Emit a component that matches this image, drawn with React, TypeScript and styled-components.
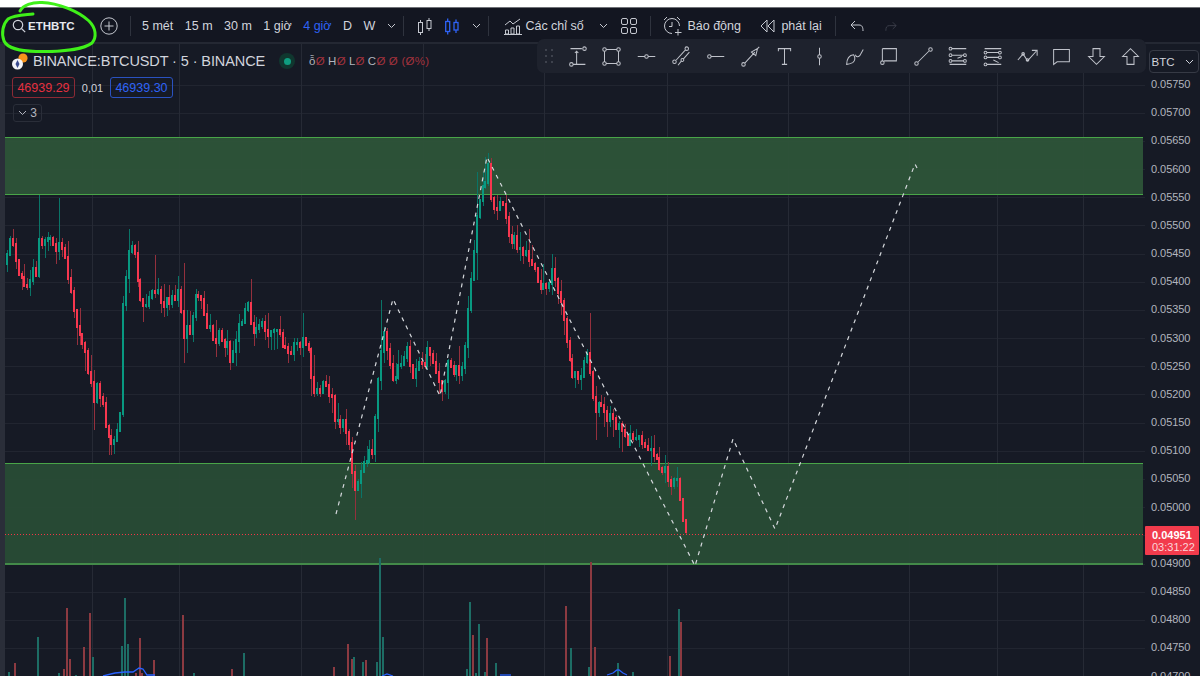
import React from "react";
import styled, { createGlobalStyle } from "styled-components";

const Global = createGlobalStyle`
  html, body { margin: 0; padding: 0; background: #fff; overflow: hidden; }
  body { font-family: "Liberation Sans", Arial, sans-serif; }
  * { box-sizing: border-box; }
`;

const BG = "#161a25";
const Page = styled.div`width: 1200px; height: 676px; display: flex; flex-direction: column; overflow: hidden; position: relative; background: #fff;`;
const TopStrip = styled.div`height: 8px; background: #fff; border-bottom: 1px solid #6f7177; flex: none;`;
const Toolbar = styled.header`height: 36px; flex: none; display: flex; align-items: center; background: #131621; color: #d1d4dc; font-size: 12.5px; padding: 2px 0 0 12px; border-bottom: 2px solid #242833;`;
const Search = styled.div`display: flex; align-items: center; gap: 2px; width: 88px; font-size: 11.5px; font-weight: 700; color: #e6e8ee;`;
const Divider = styled.span<{ $m?: string }>`width: 1px; height: 20px; background: #2f333e; flex: none; margin: ${p => p.$m || "0"};`;
const IconSlot = styled.span<{ $w: number; $c?: string; $ml?: number }>`width: ${p => p.$w}px; margin-left: ${p => p.$ml || 0}px; display: flex; justify-content: center; align-items: center; flex: none; color: ${p => p.$c || "#c5c8d0"};`;
const Tf = styled.span<{ $on?: boolean }>`color: ${p => p.$on ? "#2e63f6" : "#d1d4dc"}; white-space: nowrap; flex: none;`;
const TfGroup = styled.div`display: flex; gap: 11.5px; align-items: center; margin-left: 11px; flex: none;`;
const Label = styled.span<{ $ml?: number; $w?: number }>`margin-left: ${p => p.$ml || 0}px; white-space: nowrap; flex: none; ${p => p.$w ? `width:${p.$w}px;` : ""}`;
const Spacer = styled.span<{ $w: number }>`width: ${p => p.$w}px; flex: none;`;

const ChartRow = styled.div`flex: 1; display: flex; min-height: 0; position: relative;`;
const Rail = styled.div`width: 5px; flex: none; background: #2a2e39;`;
const Pane = styled.main`width: 1140px; flex: none; position: relative; background: ${BG};`;
const ChartSvg = styled.svg`display: block; width: 1140px; height: 632px;`;
const Axis = styled.aside`flex: 1; background: ${BG}; padding-top: 6px; display: flex; flex-direction: column; align-items: center; overflow: hidden;`;
const Select = styled.div`width: 50px; height: 23px; flex: none; border: 1px solid #363a45; border-radius: 4px; color: #d1d4dc; font-size: 11.5px; display: flex; align-items: center; justify-content: space-between; padding: 0 4px 0 2px; margin-left: 2px;`;
const Ticks = styled.div`margin-top: -3px; width: 100%;`;
const Tick = styled.div`height: 28.18px; line-height: 28.18px; font-size: 11px; color: #b2b5be; padding-left: 6px; letter-spacing: -.05px;`;
const PriceTag = styled.div`position: absolute; right: 1px; top: 482px; width: 54px; height: 29px; background: #f23b4c; border-radius: 1px; padding: 3px 0 0 7px; font-size: 11px; line-height: 12px; color: #fff; font-weight: 700;`;
const TagTime = styled.div`font-weight: 400; color: #fbd5d8;`;

const Legend = styled.div`position: absolute; left: 7px; top: 7px; display: flex; flex-direction: column; align-items: flex-start; color: #d1d4dc;`;
const TitleRow = styled.div`display: flex; align-items: center; height: 20px;`;
const Title = styled.span`font-size: 14.5px; margin-left: 5px; white-space: nowrap; color: #d1d4dc; letter-spacing: -.1px;`;
const Live = styled.span`width: 16px; height: 16px; border-radius: 50%; background: #10372f; margin-left: 14px; display: flex; align-items: center; justify-content: center; &::after { content: ""; width: 7px; height: 7px; border-radius: 50%; background: #0f9d80; }`;
const Ohlc = styled.span`margin-left: 14px; font-size: 11.5px; color: #b2b5be; letter-spacing: .3px; white-space: nowrap; b { font-weight: 400; color: #a2323d; margin-right: 3px; }`;
const Prices = styled.div`display: flex; align-items: center; margin-top: 6px;`;
const PriceBox = styled.span<{ $c: string; $b: string }>`width: 63px; height: 21px; border: 1px solid ${p => p.$b}; border-radius: 3px; color: ${p => p.$c}; font-size: 12.5px; display: flex; align-items: center; justify-content: center;`;
const Spread = styled.span`font-size: 11px; width: 35px; text-align: center; color: #d1d4dc;`;
const Collapse = styled.span`margin-top: 6px; margin-left: 1px; width: 29px; height: 18px; border: 1px solid #2a2e39; border-radius: 3px; font-size: 12px; display: flex; align-items: center; justify-content: center; gap: 3px; color: #b2b5be;`;

const DrawBar = styled.div`position: absolute; left: 532px; top: -5px; width: 609px; height: 34px; background: #1e222d; border-radius: 7px; display: flex; align-items: center; padding-left: 1px;`;
const Grip = styled.span`width: 22px; flex: none; display: flex; justify-content: center;`;
const ToolBtn = styled.span`width: 34.6px; flex: none; display: flex; justify-content: center; color: #bfc2ca;`;
const Scribble = styled.svg`position: absolute; left: 0; top: 0; pointer-events: none;`;

/* ---------- data ---------- */
const way: [number, number][] = [[5,262],[8,245],[11,235],[15,262],[20,278],[25,285],[30,276],[35,268],[38,240],[45,232],[52,240],[55,255],[60,235],[65,262],[70,290],[75,322],[80,345],[85,352],[92,400],[97,385],[105,425],[112,447],[116,430],[120,405],[122,300],[127,258],[132,232],[138,290],[145,305],[155,285],[162,305],[170,300],[178,295],[182,330],[190,330],[195,290],[200,290],[205,320],[212,335],[222,335],[230,358],[238,325],[245,300],[252,325],[260,325],[268,335],[275,320],[283,348],[295,345],[302,335],[308,345],[312,385],[320,385],[330,395],[335,425],[343,415],[349,445],[352,490],[358,480],[365,455],[372,445],[376,395],[382,332],[387,350],[392,378],[400,365],[405,345],[412,372],[420,365],[428,350],[436,378],[440,388],[447,362],[455,368],[463,365],[468,290],[472,255],[476,215],[480,185],[484,190],[487,165],[490,192],[495,215],[500,200],[505,215],[510,240],[515,240],[520,250],[525,248],[532,268],[540,285],[545,290],[550,270],[555,280],[560,300],[565,340],[570,368],[578,382],[582,365],[588,350],[590,395],[595,412],[600,402],[605,418],[610,405],[615,422],[620,432],[625,442],[630,435],[635,442],[640,440],[645,447],[650,448],[655,458],[660,470],[665,472],[670,488],[675,478],[680,505],[684,525],[688,534]];
const spikes: Record<number, number> = { 37: 195, 57: 198, 153: 255, 182: 263, 249: 279, 301: 313, 380: 300, 485: 157, 477: 172, 590: 313, 677: 467 };
const lows: Record<number, number> = { 182: 363, 92: 430, 109: 455, 354: 520, 472: 280, 475: 280, 596: 440, 615: 415 };

function rng(seed: number) { return () => { seed = (seed * 1664525 + 1013904223) >>> 0; return seed / 4294967296; }; }
function interp(x: number) {
  for (let i = 1; i < way.length; i++) if (x <= way[i][0]) {
    const [a, b] = way[i - 1]; const [c, d] = way[i];
    return b + (d - b) * (x - a) / (c - a);
  }
  return way[way.length - 1][1];
}
function buildCandles() {
  const r = rng(77); let g = "", gw = "", d = "", dw = ""; let prev = interp(5);
  const near = (m: Record<number, number>, x: number) => { for (const k of Object.keys(m)) if (Math.abs(+k - x) < 1.5) return m[+k]; return null; };
  for (let x = 6; x <= 686; x += 2.9) {
    const xr = Math.round(x);
    const c = Math.round(interp(x) + (r() - .5) * 13);
    const o = Math.round(prev);
    const top = Math.min(o, c); const bot = Math.max(o, c) + 2;
    const up = c <= o;
    let wt = top - Math.round(r() * r() * 22); let wb = bot + Math.round(r() * r() * 22);
    const st = near(spikes, x); const lo = near(lows, x);
    if (st !== null) wt = st; if (lo !== null) wb = lo;
    const body = `M${xr} ${top}h2.4v${bot - top + 1}h-2.4z`;
    const wick = `M${xr + .6} ${wt}h1.2v${wb - wt}h-1.2z`;
    if (up) { g += body; gw += wick; } else { d += body; dw += wick; }
    prev = c;
  }
  return { g, gw, d, dw };
}
const candles = buildCandles();

const vols: [number, number, 0 | 1][] = [[8,672,1],[14,663,0],[37,637,1],[58,673,1],[63,669,0],[66,608,0],[69,659,0],[75,675,1],[83,647,0],[89,613,0],[92,657,1],[121,646,1],[124,598,1],[127,644,1],[135,673,0],[139,638,0],[141,673,0],[153,660,0],[182,615,0],[193,673,1],[231,669,0],[243,653,1],[333,667,0],[347,644,0],[351,659,0],[353,657,1],[362,662,1],[365,660,0],[376,662,1],[379,558,1],[382,637,1],[466,669,1],[469,602,1],[472,635,0],[475,673,1],[478,624,1],[484,672,1],[486,638,0],[495,663,1],[565,606,0],[570,648,1],[588,667,1],[590,562,0],[594,647,0],[617,663,1],[632,672,1],[669,656,0],[678,609,1],[680,622,0]];

const hGrid = Array.from({ length: 22 }, (_, i) => 84.5 + i * 28.18);
const vGrid = [92, 179, 301, 423, 544, 667, 788, 909, 997, 1083];
const labels = Array.from({ length: 22 }, (_, i) => (0.0575 - i * 0.0005).toFixed(5));

const Line = (p: { d: string; w?: number }) => <path d={p.d} fill="none" stroke="currentColor" strokeWidth={p.w || 1} />;
const dot = (x: number, y: number) => `M${x - 1.6} ${y}a1.6 1.6 0 1 0 3.2 0a1.6 1.6 0 1 0 -3.2 0`;
const tools: string[] = [
  "M4 3h13M20 3m-2 0a2 2 0 1 0 4 0a2 2 0 1 0 -4 0M11 6v15M9 8l2-2 2 2M7 21h14M5 21m-2 0a2 2 0 1 0 4 0a2 2 0 1 0 -4 0",
  "M4 6v12M20 6v12M6 4h12M6 20h12M4 4m-2 0a2 2 0 1 0 4 0a2 2 0 1 0 -4 0M20 4m-2 0a2 2 0 1 0 4 0a2 2 0 1 0 -4 0M4 20m-2 0a2 2 0 1 0 4 0a2 2 0 1 0 -4 0M20 20m-2 0a2 2 0 1 0 4 0a2 2 0 1 0 -4 0",
  "M2 12h8M14 12h8M12 12m-2 0a2 2 0 1 0 4 0a2 2 0 1 0 -4 0",
  "M6 16L16 5M18 3m-2 0a2 2 0 1 0 4 0a2 2 0 1 0 -4 0M4 18m-2 0a2 2 0 1 0 4 0a2 2 0 1 0 -4 0M8 22L12 17M14 15L21 7M13 16m-1.6 0a1.6 1.6 0 1 0 3.2 0a1.6 1.6 0 1 0 -3.2 0",
  "M7 12h15M5 12m-2 0a2 2 0 1 0 4 0a2 2 0 1 0 -4 0",
  "M6 19L17 7M4 21m-2 0a2 2 0 1 0 4 0a2 2 0 1 0 -4 0M20 3l-2 8-5-4zM20 3l2-2",
  "M5 6V3h14v3M12 3v18M9 21h6",
  "M12 2v8M12 14v8M12 12m-2 0a2 2 0 1 0 4 0a2 2 0 1 0 -4 0",
  "M3 21c0-6 3-11 8-11c2 3 2 7-1 9c-2 1-4 2-7 2zM13 10c1 3 3 3 5 1l4-7",
  "M5 3h16v14H7M5 3v14M5 19m-2 0a2 2 0 1 0 4 0a2 2 0 1 0 -4 0",
  "M6 18L18 6M20 4m-2 0a2 2 0 1 0 4 0a2 2 0 1 0 -4 0M4 20m-2 0a2 2 0 1 0 4 0a2 2 0 1 0 -4 0",
  `M6 3h16M6 10.5h13M6 17h13M3 21h19M12 14l5-2${dot(4, 3)}${dot(4, 10.500)}${dot(20.500, 10.500)}${dot(4, 17)}${dot(20.500, 17)}`,
  `M3 3h19M6 7.500h13M6 13h13M6 21h16M13 16l6 3${dot(4, 7.500)}${dot(20.500, 7.500)}${dot(4, 13)}${dot(20.500, 13)}${dot(4, 21)}`,
  "M1 16L7 9l5 8 10-11M17 5h6v6M7 9m-1.5 0a1.5 1.5 0 1 0 3 0a1.5 1.5 0 1 0 -3 0M12 16m-1.5 0a1.5 1.5 0 1 0 3 0a1.5 1.5 0 1 0 -3 0",
  "M3 4h18v14H7l-4 3z",
  "M8 3h8v9h5l-9 9-9-9h5z",
  "M8 21h8v-9h5l-9-9-9 9h5z",
];

function Chevron() {
  return <svg width="9" height="6" viewBox="0 0 9 6" fill="none" stroke="currentColor"><path d="M1 1l3.500 3.500L8 1" /></svg>;
}

export default function App() {
  return (
    <Page>
      <Global />
      <TopStrip />
      <Toolbar>
        <Search>
          <svg width="14" height="14" viewBox="0 0 14 14" fill="none" stroke="#d1d4dc" strokeWidth="1.2"><circle cx="6" cy="6" r="4.7" /><path d="M9.500 9.500L13.200 13.200" /></svg>
          ETHBTC
        </Search>
        <IconSlot $w={18}>
          <svg width="18" height="18" viewBox="0 0 18 18" fill="none" stroke="currentColor"><circle cx="9" cy="9" r="8.2" /><path d="M9 4.500v9M4.500 9h9" /></svg>
        </IconSlot>
        <Divider $m="0 0 0 12px" />
        <TfGroup>
          <Tf>5 mét</Tf><Tf>15 m</Tf><Tf>30 m</Tf><Tf>1 giờ</Tf><Tf $on>4 giờ</Tf><Tf>D</Tf><Tf>W</Tf>
        </TfGroup>
        <IconSlot $w={12} $ml={10}><Chevron /></IconSlot>
        <Divider $m="0 0 0 6px" />
        <IconSlot $w={14} $ml={14}>
          <svg width="14" height="18" viewBox="0 0 14 18" fill="none" stroke="currentColor"><rect x=".5" y="5.500" width="4" height="10" /><path d="M2.500 3v2.500M2.500 15.500V18M11 1v2.500M11 11.500V14" /><rect x="9" y="3.500" width="4" height="8" /></svg>
        </IconSlot>
        <IconSlot $w={14} $c="#2e63f6" $ml={13}>
          <svg width="14" height="18" viewBox="0 0 14 18" fill="none" stroke="currentColor" strokeWidth="1.3"><rect x=".7" y="4.500" width="4" height="10" /><path d="M2.700 1.500v3M2.700 14.500v3M11 2.500v3M11 13v3" /><rect x="9" y="5.500" width="4" height="7.500" /></svg>
        </IconSlot>
        <IconSlot $w={12} $ml={11}><Chevron /></IconSlot>
        <Divider $m="0 0 0 6px" />
        <IconSlot $w={18} $ml={15}>
          <svg width="18" height="18" viewBox="0 0 18 18" fill="none" stroke="currentColor"><path d="M1 8l5-4 3 3 7-5" /><path d="M1.500 17v-4h3v4zM7 17v-6h3v6zM12.500 17v-8h3v8zM0 17.500h18" /></svg>
        </IconSlot>
        <Label $ml={3} $w={61}>Các chỉ số</Label>
        <IconSlot $w={12} $ml={11}><Chevron /></IconSlot>
        <IconSlot $w={16} $ml={12}>
          <svg width="16" height="16" viewBox="0 0 16 16" fill="none" stroke="currentColor"><rect x=".5" y=".5" width="6" height="6" rx="1.500" /><rect x="9.500" y=".5" width="6" height="6" rx="1.500" /><rect x=".5" y="9.500" width="6" height="6" rx="1.500" /><rect x="9.500" y="9.500" width="6" height="6" rx="1.500" /></svg>
        </IconSlot>
        <Divider $m="0 0 0 13px" />
        <IconSlot $w={20} $ml={12}>
          <svg width="20" height="20" viewBox="0 0 20 20" fill="none" stroke="currentColor"><path d="M9 17.500A7.500 7.500 0 1 1 16.500 10" /><path d="M9 6v4.500H6M1 4l3-3M17 4l-3-3M15 13v6.500M12 16.500h6.500" /></svg>
        </IconSlot>
        <Label $ml={4} $w={55}>Báo động</Label>
        <IconSlot $w={16} $ml={18}>
          <svg width="16" height="14" viewBox="0 0 16 14" fill="none" stroke="currentColor"><path d="M7 1L1 7l6 6zM14 1L8 7l6 6z" /></svg>
        </IconSlot>
        <Label $ml={5} $w={42}>phát lại</Label>
        <Divider $m="0 0 0 12px" />
        <IconSlot $w={14} $ml={14}>
          <svg width="14" height="12" viewBox="0 0 14 12" fill="none" stroke="currentColor"><path d="M5 1L1 5l4 4M1 5h8c3 0 4 2 4 6" /></svg>
        </IconSlot>
        <Spacer $w={21} />
        <IconSlot $w={12} $c="#3f434e">
          <svg width="12" height="11" viewBox="0 0 14 12" fill="none" stroke="currentColor"><path d="M9 1l4 4-4 4M13 5H5C2 5 1 7 1 11" /></svg>
        </IconSlot>
      </Toolbar>
      <ChartRow>
        <Rail />
        <Pane>
          <ChartSvg viewBox="5 44 1140 632" shapeRendering="crispEdges">
            <g stroke="#212530" strokeWidth="1">
              {hGrid.map(y => <line key={y} x1="5" x2="1145" y1={Math.round(y) + .5} y2={Math.round(y) + .5} />)}
              {vGrid.map(x => <line key={x} x1={x + .5} x2={x + .5} y1="44" y2="676" stroke="#262a35" />)}
            </g>
            <rect x="5" y="138" width="1138" height="57" fill="#2e5338" fillOpacity=".96" />
            <rect x="5" y="463" width="1138" height="101" fill="#294b35" fillOpacity=".96" />
            <g stroke="#49a548" strokeWidth="1">
              <line x1="5" x2="1143" y1="137.5" y2="137.5" />
              <line x1="5" x2="1143" y1="194.5" y2="194.5" />
              <line x1="5" x2="1143" y1="463.5" y2="463.5" />
              <line x1="5" x2="1143" y1="564" y2="564" strokeWidth="2" stroke="#438a49" />
            </g>
            <line x1="5" x2="1143" y1="534.5" y2="534.5" stroke="#f23645" strokeDasharray="1 2" />
            {vols.map(([x, y, up]) => <rect key={x} x={x} y={y} width="2" height={676 - y} fill={up ? "#1d6d65" : "#8c3a41"} />)}
            <g shapeRendering="auto" fill="none" stroke="#2962ff" strokeWidth="1.3">
              <path d="M103 676l12-3 10-1 8 0 6-4 4 1 4 6 8 0" />
              <path d="M382 676l5-2 6 2" />
              <path d="M500 675h11" />
              <path d="M607 675l6-2 4-3h2l4 3 4 2" />
            </g>
            <path d={candles.gw} fill="#0a7467" />
            <path d={candles.dw} fill="#94303d" />
            <path d={candles.g} fill="#089981" />
            <path d={candles.d} fill="#f7374f" />
            <path shapeRendering="auto" d="M336 514L393 299L440 396L487 157L695 566L733 439L775 529L915 164L918 170" fill="none" stroke="#d5d8dc" strokeWidth="1.2" strokeDasharray="4 5" />
          </ChartSvg>
          <Legend>
            <TitleRow>
              <svg width="16" height="17" viewBox="0 0 16 17"><circle cx="11" cy="5" r="4.6" fill="#f7931a" /><circle cx="5.500" cy="11" r="5.500" fill="#f3f4f8" /><path d="M5.500 7l2 4-2 4-2-4z" fill="#3a4b8f" /></svg>
              <Title>BINANCE:BTCUSDT · 5 · BINANCE</Title>
              <Live />
              <Ohlc>ỗ<b>Ø</b>H<b>Ø</b>L<b>Ø</b>C<b>Ø</b><b>Ø (Ø%)</b></Ohlc>
            </TitleRow>
            <Prices>
              <PriceBox $c="#e5303f" $b="#8b2a35">46939.29</PriceBox>
              <Spread>0,01</Spread>
              <PriceBox $c="#2e63f6" $b="#2a52c0">46939.30</PriceBox>
            </Prices>
            <Collapse><Chevron />3</Collapse>
          </Legend>
          <DrawBar>
            <Grip>
              <svg width="8" height="16" viewBox="0 0 8 16" fill="#4a4e59"><circle cx="1" cy="2" r="1" /><circle cx="7" cy="2" r="1" /><circle cx="1" cy="8" r="1" /><circle cx="7" cy="8" r="1" /><circle cx="1" cy="14" r="1" /><circle cx="7" cy="14" r="1" /></svg>
            </Grip>
            {tools.map((d, i) => (
              <ToolBtn key={i}>
                <svg width="21" height="21" viewBox="0 0 24 24"><Line d={d} w={1.15} /></svg>
              </ToolBtn>
            ))}
          </DrawBar>
        </Pane>
        <Axis>
          <Select>BTC<Chevron /></Select>
          <Ticks>{labels.map(l => <Tick key={l}>{l}</Tick>)}</Ticks>
          <PriceTag>0.04951<TagTime>03:31:22</TagTime></PriceTag>
        </Axis>
      </ChartRow>
      <Scribble width="110" height="60" viewBox="0 0 110 60" fill="none">
        <path d="M20 11C23 5 32 2 42 2.500C58 3 78 11 89 21C96 28 97 37 92 43C84 49 62 52 36 51.500C20 51 8 49 4 41C1 33 3 24 8 19C14 15 24 15 33 14" stroke="#3ff019" strokeWidth="3" strokeLinecap="round" />
      </Scribble>
    </Page>
  );
}
